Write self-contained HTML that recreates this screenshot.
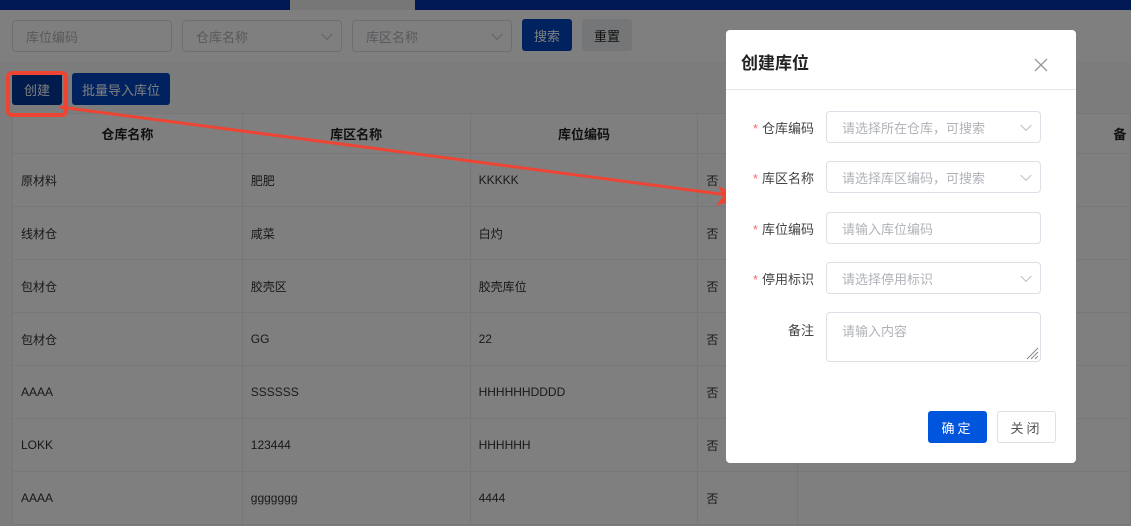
<!DOCTYPE html>
<html><head><meta charset="utf-8"><style>
*{box-sizing:border-box;margin:0;padding:0}
body{width:1131px;height:526px;overflow:hidden;position:relative;background:#fff;font-family:"Liberation Sans","Noto Sans CJK SC",sans-serif;font-size:13px;color:#333}
.abs{position:absolute}
.inp{position:absolute;border:1px solid #dcdfe6;border-radius:4px;background:#fff;color:#b0b3b8;font-size:13px;padding-left:13px;display:flex;align-items:center}
.chev{position:absolute;right:10px;top:50%;width:8px;height:8px;border-right:1px solid #b8bcc4;border-bottom:1px solid #b8bcc4;transform:translateY(-70%) rotate(45deg)}
.btn{position:absolute;border-radius:3px;display:flex;align-items:center;justify-content:center;font-size:13px}
table{position:absolute;left:12px;top:113px;border-collapse:collapse;background:#fff}
td{border:1px solid #ebeef5;height:53px;padding-left:8px;font-size:12px;color:#333}
th{border:1px solid #ebeef5;height:40px;font-size:13px;font-weight:bold;color:#222}
.lbl{position:absolute;width:100px;text-align:right;left:714px;font-size:13px;color:#444}
.lbl b{color:#f56c6c;font-weight:normal;margin-right:4px}
</style></head><body>
<div class="abs" style="left:0;top:0;width:1131px;height:10px;background:#0033aa"></div>
<div class="abs" style="left:290px;top:0;width:125px;height:10px;background:#eee"></div>
<div class="abs" style="left:0;top:10px;width:1131px;height:52px;background:#fff"></div>
<div class="abs" style="left:0;top:62px;width:1131px;height:464px;background:#f8f9fb"></div>
<div class="inp" style="left:12px;top:20px;width:160px;height:32px">库位编码</div>
<div class="inp" style="left:182px;top:20px;width:160px;height:32px">仓库名称<span class="chev"></span></div>
<div class="inp" style="left:352px;top:20px;width:160px;height:32px">库区名称<span class="chev"></span></div>
<div class="btn" style="left:522px;top:19px;width:50px;height:32px;background:#0046be;color:#fff">搜索</div>
<div class="btn" style="left:582px;top:19px;width:50px;height:32px;background:#ebedf0;color:#222">重置</div>
<div class="btn" style="left:12px;top:73px;width:50px;height:32px;background:#003699;color:#fff">创建</div>
<div class="btn" style="left:72px;top:73px;width:98px;height:32px;background:#0046be;color:#fff">批量导入库位</div>
<table>
<tr><th style="width:230px">仓库名称</th><th style="width:228px">库区名称</th><th style="width:228px">库位编码</th><th style="width:100px">停</th><th style="width:333px;text-align:right;padding-right:0;overflow:hidden;white-space:nowrap">备&nbsp;</th></tr>
<tr><td>原材料</td><td>肥肥</td><td>KKKKK</td><td>否</td><td></td></tr>
<tr><td>线材仓</td><td>咸菜</td><td>白灼</td><td>否</td><td></td></tr>
<tr><td>包材仓</td><td>胶壳区</td><td>胶壳库位</td><td>否</td><td></td></tr>
<tr><td>包材仓</td><td>GG</td><td>22</td><td>否</td><td></td></tr>
<tr><td>AAAA</td><td>SSSSSS</td><td>HHHHHHDDDD</td><td>否</td><td></td></tr>
<tr><td>LOKK</td><td>123444</td><td>HHHHHH</td><td>否</td><td></td></tr>
<tr><td>AAAA</td><td>ggggggg</td><td>4444</td><td>否</td><td></td></tr>
</table>
<div class="abs" style="left:0;top:0;width:1131px;height:526px;background:rgba(0,0,0,0.5)"></div>
<div class="abs" style="left:6px;top:71px;width:62px;height:46px;border:4px solid #ee4433;border-radius:6px"></div>
<svg class="abs" style="left:0;top:0" width="1131" height="526"><line x1="60" y1="107" x2="728" y2="195" stroke="#ee4433" stroke-width="3"/><polygon points="742,197 718,186 723,196 716,206" fill="#ee4433"/></svg>
<div class="abs" style="left:726px;top:30px;width:350px;height:433px;background:#fff;border-radius:4px"></div>
<div class="abs" style="left:741px;top:49px;font-size:17px;font-weight:bold;color:#222">创建库位</div>
<svg class="abs" style="left:1034px;top:58px" width="14" height="14"><path d="M1 1L13 13M13 1L1 13" stroke="#999" stroke-width="1.3"/></svg>
<div class="abs" style="left:726px;top:89px;width:350px;height:1px;background:#e4e6ea"></div>
<div class="lbl" style="top:118px"><b>*</b>仓库编码</div>
<div class="lbl" style="top:168px"><b>*</b>库区名称</div>
<div class="lbl" style="top:219px"><b>*</b>库位编码</div>
<div class="lbl" style="top:269px"><b>*</b>停用标识</div>
<div class="lbl" style="top:320px">备注</div>
<div class="inp" style="left:826px;top:111px;width:215px;height:32px;padding-left:15px">请选择所在仓库，可搜索<span class="chev"></span></div>
<div class="inp" style="left:826px;top:161px;width:215px;height:32px;padding-left:15px">请选择库区编码，可搜索<span class="chev"></span></div>
<div class="inp" style="left:826px;top:212px;width:215px;height:32px;padding-left:15px">请输入库位编码</div>
<div class="inp" style="left:826px;top:262px;width:215px;height:32px;padding-left:15px">请选择停用标识<span class="chev"></span></div>
<div class="inp" style="left:826px;top:312px;width:215px;height:50px;padding-left:15px;align-items:flex-start;padding-top:8px">请输入内容
<svg class="abs" style="right:1px;bottom:1px" width="14" height="14"><path d="M13 2L2 13M13 6L6 13M13 10L10 13" stroke="#888" stroke-width="1"/></svg></div>
<div class="btn" style="left:928px;top:411px;width:59px;height:32px;background:#0055dd;color:#fff;letter-spacing:3px">确定</div>
<div class="btn" style="left:997px;top:411px;width:59px;height:32px;background:#fff;border:1px solid #dcdfe6;color:#555;letter-spacing:3px">关闭</div>
</body></html>
